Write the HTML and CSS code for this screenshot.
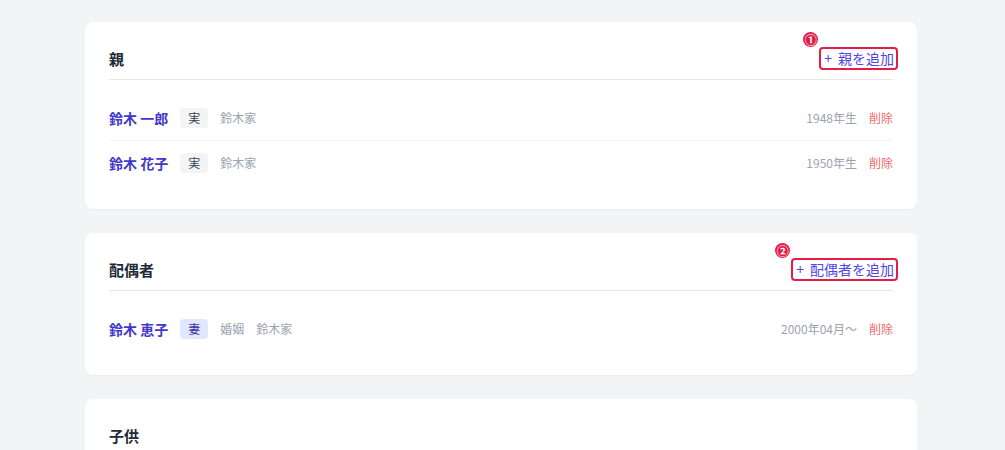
FILE: index.html
```html
<!DOCTYPE html>
<html lang="ja">
<head>
<meta charset="utf-8">
<title>家族</title>
<link rel="stylesheet" href="styles.css">
</head>
<body>
<main class="page">
  <section class="card">
    <header class="card-head">
      <h2 class="card-title">親</h2>
      <button class="add-btn"><span class="marker">①</span><span class="plus">+</span>親を追加</button>
    </header>
    <ul class="rows">
      <li class="row">
        <div class="row-main">
          <span class="name">鈴木 一郎</span>
          <span class="tag">実</span>
          <span class="meta">鈴木家</span>
        </div>
        <div class="row-side">
          <span class="meta">1948年生</span>
          <span class="del">削除</span>
        </div>
      </li>
      <li class="row">
        <div class="row-main">
          <span class="name">鈴木 花子</span>
          <span class="tag">実</span>
          <span class="meta">鈴木家</span>
        </div>
        <div class="row-side">
          <span class="meta">1950年生</span>
          <span class="del">削除</span>
        </div>
      </li>
    </ul>
  </section>

  <section class="card">
    <header class="card-head">
      <h2 class="card-title">配偶者</h2>
      <button class="add-btn"><span class="marker">②</span><span class="plus">+</span>配偶者を追加</button>
    </header>
    <ul class="rows">
      <li class="row">
        <div class="row-main">
          <span class="name">鈴木 恵子</span>
          <span class="tag tag-spouse">妻</span>
          <span class="meta">婚姻</span>
          <span class="meta">鈴木家</span>
        </div>
        <div class="row-side">
          <span class="meta">2000年04月〜</span>
          <span class="del">削除</span>
        </div>
      </li>
    </ul>
  </section>

  <section class="card">
    <header class="card-head">
      <h2 class="card-title">子供</h2>
    </header>
  </section>
</main>
</body>
</html>
```

FILE: styles.css
```css
* { box-sizing: border-box; }

html, body {
  margin: 0;
  padding: 0;
  background: #f3f4f6;
  font-family: "Noto Sans CJK JP", "Noto Sans", sans-serif;
  color: #1f2937;
}

.page {
  padding: 22px 88px 40px 85px;
  display: flex;
  flex-direction: column;
  gap: 24px;
}

.card {
  background: #ffffff;
  border-radius: 8px;
  box-shadow: 0 1px 2px rgba(0, 0, 0, 0.04);
  padding: 24px;
}

.card-head {
  display: flex;
  align-items: center;
  justify-content: space-between;
  padding-bottom: 8px;
  border-bottom: 1px solid #e5e7eb;
  height: 34px;
}

.card-title {
  margin: 0;
  font-size: 15px;
  font-weight: 700;
  line-height: 24px;
  color: #1f2937;
}

.add-btn {
  position: relative;
  display: inline-flex;
  align-items: center;
  font-family: inherit;
  font-size: 14px;
  line-height: 19px;
  color: #4f46e5;
  background: transparent;
  border: 2px solid #e11d48;
  border-radius: 4px;
  padding: 0 2px 0 1px;
  margin-right: -5px;
  cursor: pointer;
}

.plus {
  margin-right: 6px;
  margin-left: 2px;
}

.marker {
  position: absolute;
  top: -17px;
  left: -18px;
  width: 15px;
  height: 15px;
  border-radius: 50%;
  background: #e11d48;
  color: #ffffff;
  font-size: 12px;
  font-weight: 700;
  line-height: 15px;
  text-align: center;
}

.rows {
  list-style: none;
  margin: 16px 0 0;
  padding: 0;
}

.row {
  display: flex;
  align-items: center;
  justify-content: space-between;
  padding: 12px 0;
  border-bottom: 1px solid #f3f4f6;
  line-height: 20px;
}

.row:last-child { border-bottom: none; }

.row-main, .row-side {
  display: flex;
  align-items: center;
  gap: 12px;
}

.name {
  font-size: 14px;
  font-weight: 700;
  color: #4338ca;
}

.tag {
  display: inline-block;
  height: 20px;
  line-height: 20px;
  padding: 0 8px;
  border-radius: 4px;
  background: #f3f4f6;
  color: #374151;
  font-size: 12px;
}

.tag-spouse {
  background: #e0e7ff;
  color: #3730a3;
}

.meta {
  font-size: 12px;
  color: #9ca3af;
}

.del {
  font-size: 12px;
  color: #ef6b6b;
}
```
